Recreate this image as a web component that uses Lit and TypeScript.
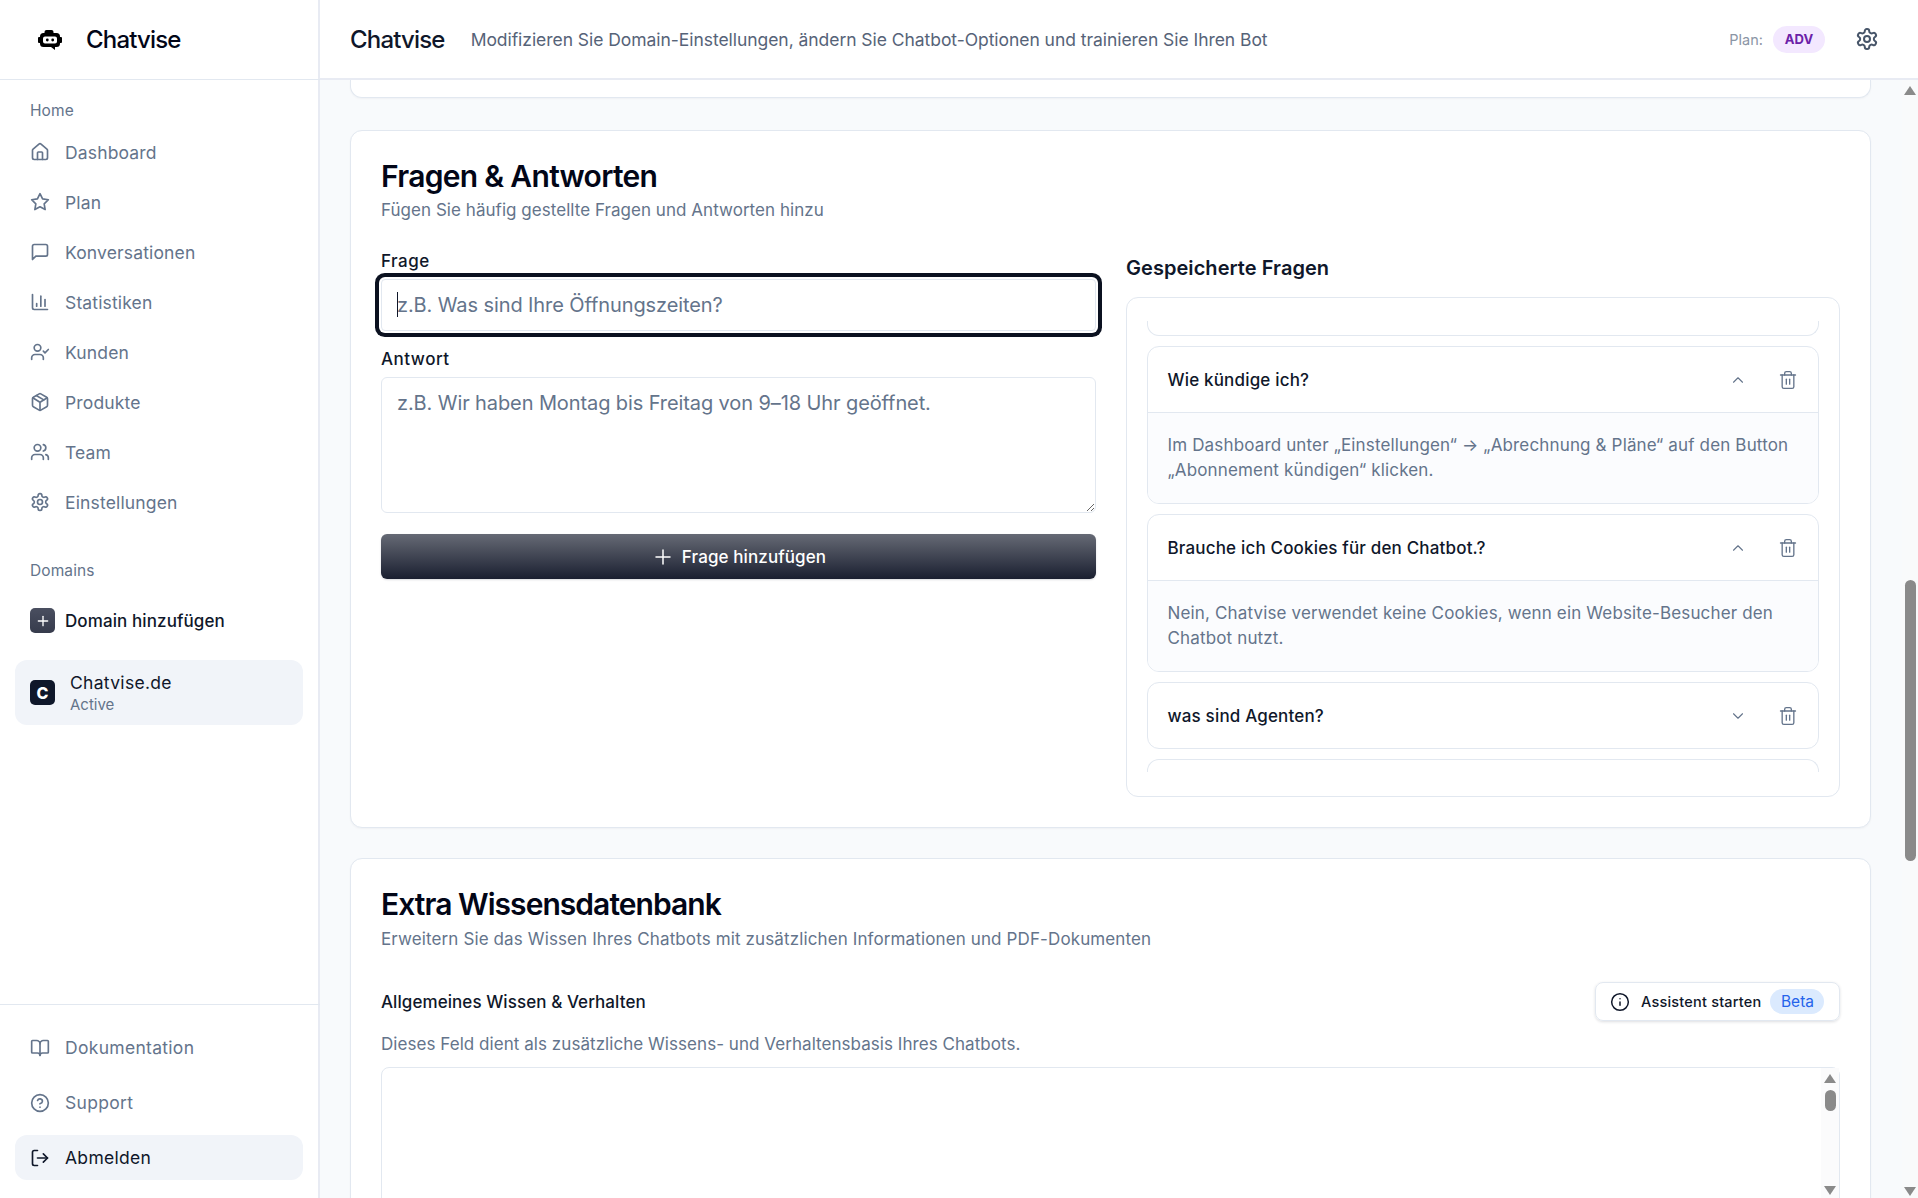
import { LitElement, html, css, svg } from "lit";
import { customElement } from "lit/decorators.js";

const ic = (body: unknown, cls = "ic") => html`<svg class=${cls} viewBox="0 0 24 24" fill="none" stroke="currentColor" stroke-width="2" stroke-linecap="round" stroke-linejoin="round">${body}</svg>`;

const gearP = svg`<path d="M12.22 2h-.44a2 2 0 0 0-2 2v.18a2 2 0 0 1-1 1.73l-.43.25a2 2 0 0 1-2 0l-.15-.08a2 2 0 0 0-2.73.73l-.22.38a2 2 0 0 0 .73 2.73l.15.1a2 2 0 0 1 1 1.72v.51a2 2 0 0 1-1 1.74l-.15.09a2 2 0 0 0-.73 2.73l.22.38a2 2 0 0 0 2.73.73l.15-.08a2 2 0 0 1 2 0l.43.25a2 2 0 0 1 1 1.73V20a2 2 0 0 0 2 2h.44a2 2 0 0 0 2-2v-.18a2 2 0 0 1 1-1.73l.43-.25a2 2 0 0 1 2 0l.15.08a2 2 0 0 0 2.73-.73l.22-.39a2 2 0 0 0-.73-2.73l-.15-.08a2 2 0 0 1-1-1.74v-.5a2 2 0 0 1 1-1.74l.15-.09a2 2 0 0 0 .73-2.73l-.22-.38a2 2 0 0 0-2.73-.73l-.15.08a2 2 0 0 1-2 0l-.43-.25a2 2 0 0 1-1-1.73V4a2 2 0 0 0-2-2z"/><circle cx="12" cy="12" r="3"/>`;
const icons: Record<string, unknown> = {
  home: svg`<path d="M15 21v-8a1 1 0 0 0-1-1h-4a1 1 0 0 0-1 1v8"/><path d="M3 10a2 2 0 0 1 .709-1.528l7-5.999a2 2 0 0 1 2.582 0l7 5.999A2 2 0 0 1 21 10v9a2 2 0 0 1-2 2H5a2 2 0 0 1-2-2z"/>`,
  star: svg`<polygon points="12 2 15.09 8.26 22 9.27 17 14.14 18.18 21.02 12 17.77 5.82 21.02 7 14.14 2 9.27 8.91 8.26 12 2"/>`,
  msg: svg`<path d="M21 15a2 2 0 0 1-2 2H7l-4 4V5a2 2 0 0 1 2-2h14a2 2 0 0 1 2 2z"/>`,
  chart: svg`<path d="M3 3v16a2 2 0 0 0 2 2h16"/><path d="M18 17V9"/><path d="M13 17V5"/><path d="M8 17v-3"/>`,
  ucheck: svg`<path d="M16 21v-2a4 4 0 0 0-4-4H6a4 4 0 0 0-4 4v2"/><circle cx="9" cy="7" r="4"/><polyline points="16 11 18 13 22 9"/>`,
  pkg: svg`<path d="M11 21.73a2 2 0 0 0 2 0l7-4A2 2 0 0 0 21 16V8a2 2 0 0 0-1-1.73l-7-4a2 2 0 0 0-2 0l-7 4A2 2 0 0 0 3 8v8a2 2 0 0 0 1 1.73z"/><path d="M12 22V12"/><path d="m3.3 7 7.703 4.734a2 2 0 0 0 1.994 0L20.7 7"/><path d="m7.5 4.27 9 5.15"/>`,
  users: svg`<path d="M16 21v-2a4 4 0 0 0-4-4H6a4 4 0 0 0-4 4v2"/><circle cx="9" cy="7" r="4"/><path d="M22 21v-2a4 4 0 0 0-3-3.87"/><path d="M16 3.13a4 4 0 0 1 0 7.75"/>`,
  gear: gearP,
  book: svg`<path d="M12 7v14"/><path d="M3 18a1 1 0 0 1-1-1V4a1 1 0 0 1 1-1h5a4 4 0 0 1 4 4 4 4 0 0 1 4-4h5a1 1 0 0 1 1 1v13a1 1 0 0 1-1 1h-6a3 3 0 0 0-3 3 3 3 0 0 0-3-3z"/>`,
  help: svg`<circle cx="12" cy="12" r="10"/><path d="M9.09 9a3 3 0 0 1 5.83 1c0 2-3 3-3 3"/><path d="M12 17h.01"/>`,
  logout: svg`<path d="M9 21H5a2 2 0 0 1-2-2V5a2 2 0 0 1 2-2h4"/><polyline points="16 17 21 12 16 7"/><line x1="21" y1="12" x2="9" y2="12"/>`,
  trash: svg`<path d="M3 6h18"/><path d="M19 6v14c0 1-1 2-2 2H7c-1 0-2-1-2-2V6"/><path d="M8 6V4c0-1 1-2 2-2h4c1 0 2 1 2 2v2"/><line x1="10" y1="11" x2="10" y2="17"/><line x1="14" y1="11" x2="14" y2="17"/>`,
  up: svg`<path d="m18 15-6-6-6 6"/>`,
  down: svg`<path d="m6 9 6 6 6-6"/>`,
  plus: svg`<path d="M5 12h14"/><path d="M12 5v14"/>`,
  info: svg`<circle cx="12" cy="12" r="10"/><path d="M12 16v-4"/><path d="M12 8h.01"/>`,
};

const nav = [
  ["home", "Dashboard"], ["star", "Plan"], ["msg", "Konversationen"], ["chart", "Statistiken"],
  ["ucheck", "Kunden"], ["pkg", "Produkte"], ["users", "Team"], ["gear", "Einstellungen"],
];

const faq = [
  { q: "Wie kündige ich?", a: "Im Dashboard unter „Einstellungen“ → „Abrechnung & Pläne“ auf den Button „Abonnement kündigen“ klicken." },
  { q: "Brauche ich Cookies für den Chatbot.?", a: "Nein, Chatvise verwendet keine Cookies, wenn ein Website-Besucher den Chatbot nutzt." },
  { q: "was sind Agenten?", a: "" },
];

@customElement("app-root")
export class AppRoot extends LitElement {
  static styles = css`
    :host { display: block; height: 100vh; overflow: hidden; font-family: Inter, "Liberation Sans", sans-serif; color: #0f172a; background: #f8fafc; }
    * { box-sizing: border-box; }
    .app { display: grid; grid-template-columns: 320px 1fr; height: 100%; }
    .ic { width: 20px; height: 20px; flex: none; }

    .side { background: #fff; border-right: 2px solid #e8ebf3; display: flex; flex-direction: column; height: 1198px; }
    .brand { height: 80px; border-bottom: 1px solid #e2e8f0; display: flex; align-items: center; padding-left: 38px; gap: 24px; flex: none; margin-right: -2px; }
    .logo { width: 24px; height: 20px; flex: none; }
    .brand span { font-size: 24px; font-weight: 500; letter-spacing: -0.82px; color: #020617; }
    .sec { font-size: 15.500px; line-height: 20px; color: #64748b; padding-left: 30px; letter-spacing: 0.1px; }
    .home { margin-top: 21px; }
    .navlist { margin-top: 6px; }
    .navi { display: flex; align-items: center; height: 50px; padding-left: 30px; gap: 15px; font-size: 17.500px; color: #64748b; letter-spacing: 0.15px; }
    .domains { margin-top: 34px; }
    .add { display: flex; align-items: center; gap: 10px; padding-left: 30px; margin-top: 27px; font-size: 17px; font-weight: 500; letter-spacing: 0.1px; color: #0f172a; }
    .add b { width: 25px; height: 25px; border-radius: 5px; background: linear-gradient(#4a4f60, #363b4c); color: #fff; display: flex; align-items: center; justify-content: center; }
    .add b svg { width: 16px; height: 16px; }
    .active { margin: 27px 15px 0; height: 65px; background: #f1f4f9; border-radius: 12px; display: flex; align-items: center; padding-left: 15px; gap: 15px; }
    .active b { width: 25px; height: 25px; border-radius: 5px; background: #0f172a; color: #fff; font-size: 16px; font-weight: 800; display: flex; align-items: center; justify-content: center; }
    .active div { display: flex; flex-direction: column; }
    .active .n { font-size: 17.500px; line-height: 24px; letter-spacing: 0.3px; }
    .active .s { font-size: 15px; line-height: 20px; color: #64748b; }
    .foot { margin-top: auto; border-top: 1px solid #e2e8f0; padding: 15px 17px 18px 15px; margin-right: -2px; }
    .fi { display: flex; align-items: center; height: 55px; padding-left: 15px; gap: 15px; font-size: 17.500px; color: #64748b; letter-spacing: 0.3px; }
    .fi.on { height: 45px; margin-top: 5px; background: #f1f4f9; border-radius: 12px; color: #0f172a; }

    .main { display: flex; flex-direction: column; min-width: 0; height: 1198px; }
    .top { height: 80px; background: #fff; border-bottom: 2px solid #e8ebf3; display: flex; align-items: center; padding: 0 39px 0 30px; flex: none; }
    .top h1 { margin: 0; font-size: 24px; font-weight: 500; letter-spacing: -0.82px; color: #0f172a; }
    .top .d { margin-left: 26px; font-size: 17.500px; color: #566378; letter-spacing: -0.05px; }
    .plan { margin-left: auto; font-size: 14.500px; color: #8b95a5; }
    .badge { margin-left: 10px; width: 52px; height: 27px; border-radius: 14px; background: #f3e8ff; color: #6b21a8; font-size: 13px; font-weight: 700; display: flex; align-items: center; justify-content: center; }
    .top .g { width: 24px; height: 24px; margin-left: 30px; color: #475569; }

    .body { flex: 1; display: flex; min-height: 0; }
    .scroll { flex: 1; min-width: 0; padding: 0 31px 0 30px; overflow: hidden; }
    .card { background: #fff; border: 1px solid #e2e8f0; border-radius: 12px; box-shadow: 0 1px 2px rgba(15,23,42,.04); }
    .stub { height: 18px; border-top: 0; border-radius: 0 0 12px 12px; }
    .qa { margin-top: 32px; padding: 27px 30px 29px; height: 698px; }
    h2 { margin: 0; font-size: 30px; line-height: 36px; font-weight: 600; letter-spacing: -0.7px; color: #020617; }
    .kb h2 { letter-spacing: -0.95px; }
    .sub { margin-top: 4px; font-size: 17px; line-height: 24px; color: #64748b; letter-spacing: 0.04px; }
    .cols { display: grid; grid-template-columns: 715px 714px; gap: 30px; margin-top: 27px; }
    label { display: block; font-size: 17px; line-height: 24px; font-weight: 500; color: #0f172a; letter-spacing: 0.5px; }
    .fw { position: relative; margin-top: 6px; height: 52px; }
    input, textarea { display: block; width: 100%; font: inherit; font-size: 20px; color: #0f172a; background: #fff; border: 1px solid #e2e8f0; border-radius: 6px; outline: none; padding: 0 15px; letter-spacing: -0.1px; }
    input { height: 52px; box-shadow: 0 0 0 2px #fff, 0 0 0 6px #0b1120; border-radius: 4px; }
    textarea { height: 136px; margin-top: 6px; padding: 11px 15px; line-height: 28px; resize: vertical; }
    ::placeholder { color: #64748b; opacity: 1; }
    .caret { position: absolute; left: 16px; top: 13px; width: 1px; height: 25px; background: #0f172a; }
    .ant { margin-top: 16px; }
    .btn { margin-top: 21px; height: 45px; border-radius: 6px; background: linear-gradient(#666a75, #1a1f30); box-shadow: 0 1px 2px rgba(15,23,42,.15); color: #fff; display: flex; align-items: center; justify-content: center; gap: 7px; font-size: 17px; font-weight: 500; letter-spacing: 0.1px; }
    .btn svg { width: 24px; height: 24px; stroke-width: 1.500; }
    .rt { padding-top: 5px; }
    h3 { margin: 0; font-size: 20px; line-height: 28px; font-weight: 600; letter-spacing: 0.05px; color: #0f172a; }
    .panel { margin-top: 15px; height: 500px; border: 1px solid #e2e8f0; border-radius: 12px; padding: 23px 20px 24px; }
    .list { height: 451px; overflow: hidden; display: flex; flex-direction: column; gap: 10px; }
    .item { flex: none; border: 1px solid #e2e8f0; border-radius: 12px; overflow: hidden; }
    .ih { height: 65px; display: flex; align-items: center; padding: 0 20px 0 19.500px; font-size: 17px; font-weight: 500; letter-spacing: 0.17px; color: #0f172a; }
    .ih span { flex: 1; }
    .ih .c { width: 18px; height: 18px; color: #64748b; margin-right: 31px; stroke-width: 1.500; }
    .ih .t { width: 20px; height: 20px; color: #64748b; stroke-width: 1.600; }
    .ib { border-top: 1px solid #e2e8f0; background: #fbfcfe; height: 91px; padding: 20px 16px 0 19.500px; font-size: 17px; line-height: 25px; color: #64748b; letter-spacing: 0.15px; }
    .s1 { height: 15px; border-top: 0; border-radius: 0 0 12px 12px; }
    .s2 { height: 13px; border-bottom: 0; border-radius: 12px 12px 0 0; }

    .kb { margin-top: 30px; padding: 27px 30px 0; height: 400px; }
    .kb .sub { margin-top: 5px; letter-spacing: 0.12px; }
    .kr { display: flex; align-items: center; justify-content: space-between; margin-top: 31px; }
    .kr strong { font-size: 17px; font-weight: 500; letter-spacing: 0.07px; }
    .as { width: 245px; height: 39px; border: 1px solid #e2e8f0; border-radius: 8px; box-shadow: 0 1px 3px rgba(15,23,42,.14); display: flex; align-items: center; padding-left: 14px; font-size: 14.500px; font-weight: 500; color: #0f172a; letter-spacing: 0.2px; }
    .as svg { margin-right: 11px; width: 20px; height: 20px; stroke-width: 1.800; }
    .as i { margin-left: 9px; font-style: normal; width: 54px; height: 25px; border-radius: 13px; background: #dbeafe; color: #2563eb; font-size: 15.500px; font-weight: 400; display: flex; align-items: center; justify-content: center; letter-spacing: 0; }
    .kd { margin-top: 11px; font-size: 17px; line-height: 24px; color: #64748b; letter-spacing: 0.05px; }
    .ta { position: relative; margin-top: 11px; height: 200px; width: 1459px; border: 1px solid #e2e8f0; border-radius: 8px; background: #fff; }
    .sb { position: absolute; right: 0; top: 0; width: 18px; height: 132px; padding-top: 6px; background: #fbfbfc; display: flex; flex-direction: column; align-items: center; }
    .sb .tri-d { margin-top: auto; margin-bottom: 5px; }
    .tri-u, .tri-d { width: 0; height: 0; border-left: 6px solid transparent; border-right: 6px solid transparent; flex: none; }
    .tri-u { border-bottom: 9px solid #8a8a8a; }
    .tri-d { border-top: 9px solid #8a8a8a; }
    .sb .th { width: 11px; height: 21px; border-radius: 6px; background: #8a8a8a; margin-top: 7px; }
    .main-sb { width: 16px; flex: none; background: #f9fafb; padding-top: 6px; display: flex; flex-direction: column; align-items: center; }
    .main-sb .th { width: 11px; height: 281px; border-radius: 6px; background: #8a8a8a; margin-top: 485px; flex: none; }
    .main-sb .tri-d { margin-top: 326px; }
  `;

  private item(f: { q: string; a: string }) {
    return html`<div class="item">
      <div class="ih"><span>${f.q}</span>${ic(f.a ? icons.up : icons.down, "c")}${ic(icons.trash, "t")}</div>
      ${f.a ? html`<div class="ib">${f.a}</div>` : ""}
    </div>`;
  }

  render() {
    return html`<div class="app">
      <aside class="side">
        <div class="brand">
          <svg class="logo" viewBox="0 0 24 20" fill="#000">
            <rect x="6.500" y="0" width="9" height="5" rx="2"/>
            <rect x="0" y="7" width="4" height="6" rx="1"/><rect x="20" y="7" width="4" height="6" rx="1"/>
            <path fill-rule="evenodd" d="M5.500 3h13A3.500 3.500 0 0 1 22 6.500v7a3.500 3.500 0 0 1-3.500 3.500H17v3l-4-3H5.500A3.500 3.500 0 0 1 2 13.500v-7A3.500 3.500 0 0 1 5.500 3zM7 6.500a2 2 0 0 0-2 2v3a2 2 0 0 0 2 2h10a2 2 0 0 0 2-2v-3a2 2 0 0 0-2-2z"/>
            <circle cx="9.300" cy="10" r="1.400"/><circle cx="14.700" cy="10" r="1.400"/>
          </svg>
          <span>Chatvise</span>
        </div>
        <div class="sec home">Home</div>
        <div class="navlist">${nav.map(([i, t]) => html`<div class="navi">${ic(icons[i])}<span>${t}</span></div>`)}</div>
        <div class="sec domains">Domains</div>
        <div class="add"><b>${ic(icons.plus)}</b><span>Domain hinzufügen</span></div>
        <div class="active"><b>C</b><div><span class="n">Chatvise.de</span><span class="s">Active</span></div></div>
        <div class="foot">
          <div class="fi">${ic(icons.book)}<span>Dokumentation</span></div>
          <div class="fi">${ic(icons.help)}<span>Support</span></div>
          <div class="fi on">${ic(icons.logout)}<span>Abmelden</span></div>
        </div>
      </aside>
      <div class="main">
        <header class="top">
          <h1>Chatvise</h1>
          <span class="d">Modifizieren Sie Domain-Einstellungen, ändern Sie Chatbot-Optionen und trainieren Sie Ihren Bot</span>
          <span class="plan">Plan:</span>
          <span class="badge">ADV</span>
          ${ic(icons.gear, "g")}
        </header>
        <div class="body">
          <div class="scroll">
            <div class="card stub"></div>
            <section class="card qa">
              <h2>Fragen &amp; Antworten</h2>
              <div class="sub">Fügen Sie häufig gestellte Fragen und Antworten hinzu</div>
              <div class="cols">
                <div>
                  <label>Frage</label>
                  <div class="fw"><input placeholder="z.B. Was sind Ihre Öffnungszeiten?" /><span class="caret"></span></div>
                  <label class="ant">Antwort</label>
                  <textarea placeholder="z.B. Wir haben Montag bis Freitag von 9–18 Uhr geöffnet."></textarea>
                  <div class="btn">${ic(icons.plus)}<span>Frage hinzufügen</span></div>
                </div>
                <div class="rt">
                  <h3>Gespeicherte Fragen</h3>
                  <div class="panel"><div class="list">
                    <div class="item s1"></div>
                    ${faq.map((f) => this.item(f))}
                    <div class="item s2"></div>
                  </div></div>
                </div>
              </div>
            </section>
            <section class="card kb">
              <h2>Extra Wissensdatenbank</h2>
              <div class="sub">Erweitern Sie das Wissen Ihres Chatbots mit zusätzlichen Informationen und PDF-Dokumenten</div>
              <div class="kr">
                <strong>Allgemeines Wissen &amp; Verhalten</strong>
                <div class="as">${ic(icons.info)}<span>Assistent starten</span><i>Beta</i></div>
              </div>
              <div class="kd">Dieses Feld dient als zusätzliche Wissens- und Verhaltensbasis Ihres Chatbots.</div>
              <div class="ta"><div class="sb"><div class="tri-u"></div><div class="th"></div><div class="tri-d"></div></div></div>
            </section>
          </div>
          <div class="main-sb"><div class="tri-u"></div><div class="th"></div><div class="tri-d"></div></div>
        </div>
      </div>
    </div>`;
  }
}
